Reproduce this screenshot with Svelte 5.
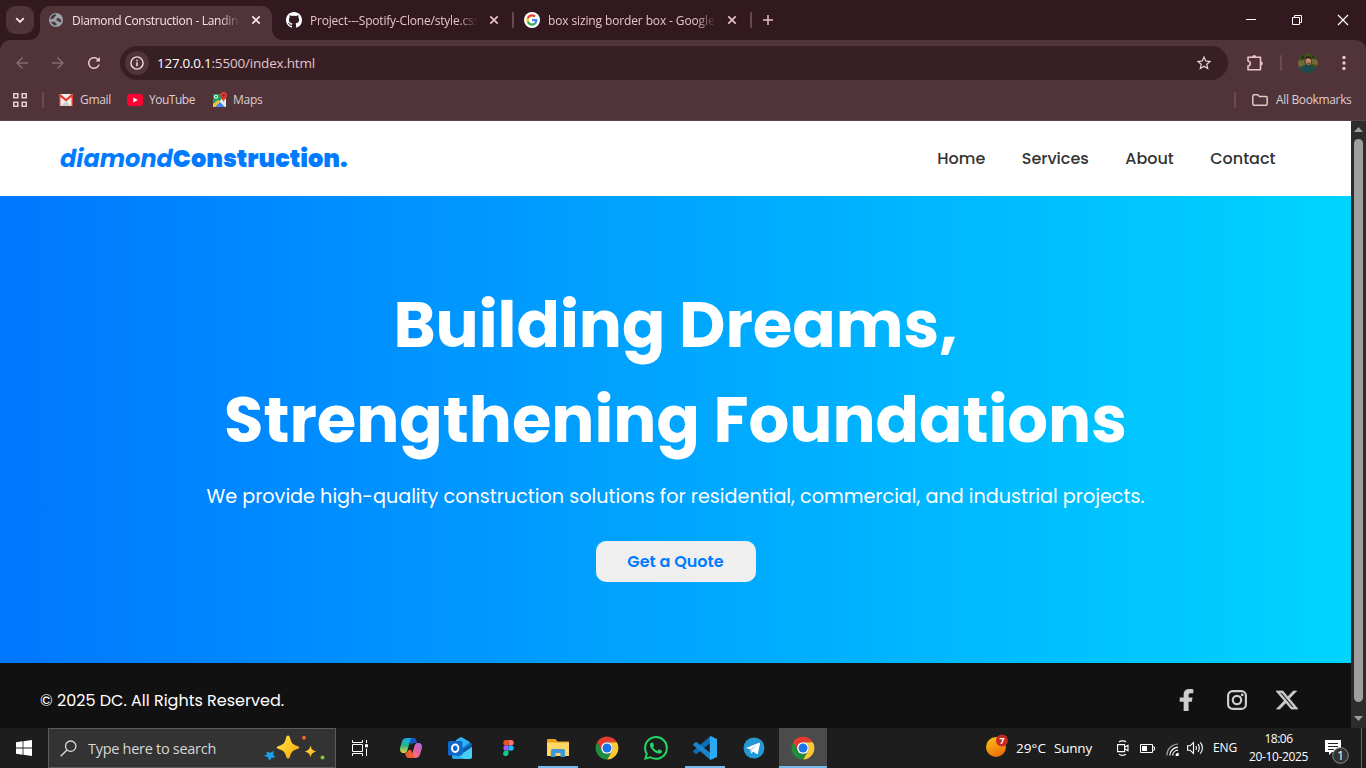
<script>
  // Tracks a line of text so that it fills the given width.
  function fit(node, width) {
    const natural = node.getBoundingClientRect().width;
    node.style.letterSpacing = (width - natural) / node.textContent.length + 'px';
  }

  const links = ['Home', 'Services', 'About', 'Contact'];
</script>

{#snippet chrome()}
  <svg width="24" height="24" viewBox="0 0 48 48">
    <path fill="#e33b2e" d="M4.2 12.5A23 23 0 0 1 43.8 12.5H24A11.5 11.5 0 0 0 14 29.8Z" />
    <path fill="#fcc934" d="M43.8 12.5A23 23 0 0 1 24 47L34 29.8A11.5 11.5 0 0 0 24 12.5Z" />
    <path fill="#1e8e3e" d="M24 47A23 23 0 0 1 4.2 12.5L14 29.8A11.5 11.5 0 0 0 34 29.8Z" />
    <circle cx="24" cy="24" r="11.7" fill="#fff" />
    <circle cx="24" cy="24" r="9" fill="#1a73e8" />
  </svg>
{/snippet}

{#snippet cross()}
  <svg class="cross" width="10" height="10" viewBox="0 0 10 10"><path d="M1.3 1.3l7.4 7.4M8.7 1.3L1.3 8.7" fill="none" stroke="currentColor" stroke-width="1.7" /></svg>
{/snippet}

<div class="screen">
  <div class="tabs">
    <div class="tab-search">
      <svg width="10" height="7" viewBox="0 0 10 7"><path d="M1.2 1.2L5 5l3.8-3.8" fill="none" stroke="currentColor" stroke-width="1.8" /></svg>
    </div>
    <div class="tab active">
      <svg width="14" height="14" viewBox="0 0 14 14">
        <circle cx="7" cy="7" r="7" fill="#9aa3a9" />
        <path d="M7.5 1.2c-1 1-.2 1.8-1.5 2.3C4.600 4 5.500 5.700 4 5.800L1.300 6.200C1.600 3 4.200 1 7.500 1.200zM7.800 5.200l2-.2 2.500 2.200-.5 2-1.800-.1-1.200-1.300-1.400-.3zM2 8.700l3.300.1c1.500.4 1 1.500 2.300 1.700l-.1 2.100C5 12.700 2.700 11 2 8.700z" fill="#50343a" />
      </svg>
      <span class="title"><span class="line" use:fit={166}>Diamond Construction - Landin</span></span>
      {@render cross()}
    </div>
    <div class="tab">
      <svg width="16" height="16" viewBox="0 0 16 16"><path fill="#fff" d="M8 0C3.580 0 0 3.580 0 8c0 3.540 2.290 6.530 5.470 7.590.4.070.55-.17.55-.38 0-.19-.01-.82-.01-1.490-2.010.37-2.530-.49-2.690-.94-.09-.23-.48-.94-.82-1.130-.28-.15-.68-.52-.01-.53.63-.01 1.080.58 1.230.82.72 1.210 1.870.87 2.330.66.070-.52.28-.87.51-1.070-1.780-.2-3.640-.89-3.640-3.950 0-.87.31-1.590.82-2.150-.08-.2-.36-1.020.08-2.120 0 0 .67-.21 2.200.82.64-.18 1.320-.27 2-.27s1.360.090 2 .27c1.530-1.040 2.200-.82 2.200-.82.44 1.100.16 1.920.08 2.120.51.56.82 1.270.82 2.150 0 3.070-1.870 3.750-3.650 3.950.29.25.54.73.54 1.480 0 1.070-.01 1.930-.01 2.200 0 .21.15.46.55.38A8.010 8.010 0 0 0 16 8c0-4.420-3.580-8-8-8z" /></svg>
      <span class="title"><span class="line" use:fit={169}>Project---Spotify-Clone/style.css</span></span>
      {@render cross()}
    </div>
    <i class="tick"></i>
    <div class="tab third">
      <svg width="16" height="16" viewBox="0 0 68 68">
        <circle cx="34" cy="34" r="34" fill="#fff" />
        <g transform="translate(10 10)">
          <path fill="#EA4335" d="M24 9.500c3.540 0 6.710 1.220 9.210 3.600l6.850-6.850C35.900 2.380 30.470 0 24 0 14.620 0 6.510 5.380 2.560 13.220l7.980 6.190C12.430 13.720 17.740 9.500 24 9.500z" />
          <path fill="#4285F4" d="M46.980 24.550c0-1.570-.15-3.090-.38-4.550H24v9.020h12.940c-.58 2.960-2.260 5.480-4.780 7.180l7.730 6c4.510-4.180 7.090-10.360 7.090-17.650z" />
          <path fill="#FBBC05" d="M10.530 28.590c-.48-1.450-.76-2.990-.76-4.590s.27-3.140.76-4.590l-7.980-6.190C.92 16.460 0 20.120 0 24c0 3.880.92 7.540 2.560 10.780l7.970-6.190z" />
          <path fill="#34A853" d="M24 48c6.480 0 11.930-2.130 15.890-5.810l-7.730-6c-2.150 1.450-4.920 2.300-8.160 2.300-6.260 0-11.570-4.220-13.470-9.910l-7.980 6.190C6.510 42.620 14.620 48 24 48z" />
        </g>
      </svg>
      <span class="title"><span class="line" use:fit={166.500}>box sizing border box - Google</span></span>
      {@render cross()}
    </div>
    <i class="tick"></i>
    <svg class="plus" width="10" height="10" viewBox="0 0 10 10"><path d="M5 0v10M0 5h10" stroke="#e6bdc7" stroke-width="1.500" /></svg>
    <div class="window">
      <svg width="10" height="10" viewBox="0 0 10 10"><path d="M0 4.500h10" stroke="#fff" /></svg>
      <svg width="10" height="10" viewBox="0 0 10 10"><path d="M.5 2.500h7v7h-7zM2.500 2.500v-2h7v7h-2" fill="none" stroke="#fff" /></svg>
      <svg width="10" height="10" viewBox="0 0 10 10"><path d="M0 0l10 10M10 0L0 10" stroke="#fff" stroke-width="1.200" /></svg>
    </div>
  </div>

  <div class="chrome">
    <div class="toolbar">
      <svg class="dim" width="18" height="18" viewBox="0 0 24 24"><path fill="currentColor" d="M20 11H7.830l5.590-5.590L12 4l-8 8 8 8 1.410-1.410L7.830 13H20z" /></svg>
      <svg class="dim" width="18" height="18" viewBox="0 0 24 24"><path fill="currentColor" d="M4 11h12.170l-5.590-5.590L12 4l8 8-8 8-1.410-1.410L16.170 13H4z" /></svg>
      <svg width="18" height="18" viewBox="0 0 24 24"><path fill="#ecc3cd" d="M17.650 6.350C16.200 4.900 14.210 4 12 4c-4.420 0-7.990 3.580-7.990 8s3.570 8 7.990 8c3.730 0 6.840-2.550 7.730-6h-2.080c-.82 2.330-3.040 4-5.650 4-3.310 0-6-2.690-6-6s2.690-6 6-6c1.660 0 3.140.69 4.220 1.780L14 10h6V4z" /></svg>
      <div class="omnibox">
        <div class="info">
          <svg width="14" height="14" viewBox="0 0 14 14"><circle cx="7" cy="7" r="6.100" fill="none" stroke="#eddde0" stroke-width="1.400" /><path d="M7 6.200v4M7 3.700v1.500" stroke="#eddde0" stroke-width="1.500" /></svg>
        </div>
        <span class="url"><b class="line" use:fit={54.500}>127.0.0.1</b><span class="line" use:fit={103.500}>:5500/index.html</span></span>
        <svg width="18" height="18" viewBox="0 0 24 24"><path fill="#e6d3d6" d="M22 9.240l-7.190-.62L12 2 9.190 8.630 2 9.240l5.460 4.730L5.820 21 12 17.270 18.180 21l-1.630-7.030zM12 15.400l-3.760 2.270 1-4.280-3.320-2.880 4.380-.38L12 6.100l1.710 4.040 4.380.38-3.320 2.880 1 4.280z" /></svg>
      </div>
      <svg class="puzzle" width="18" height="18" viewBox="0 0 18 18"><path d="M2 3.300h12.500v12.400H2V12c3-.5 3-4.500 0-5z" fill="none" stroke="#ecc3cd" stroke-width="1.600" stroke-linejoin="round" /><path d="M6.200 3a2 2 0 0 1 4 0zM14.800 7.500a2 2 0 0 1 0 4z" fill="#ecc3cd" /></svg>
      <i class="tick"></i>
      <svg class="avatar" width="20" height="20" viewBox="0 0 20 20">
        <defs><clipPath id="face"><circle cx="10" cy="10" r="10" /></clipPath></defs>
        <g clip-path="url(#face)">
          <path fill="#46501f" d="M0 0h20v20H0z" />
          <path fill="#75683a" d="M0 8l6-1 1 5-7 2zM14 6l6 1v5l-6-1z" />
          <path fill="#293216" d="M3 2l4 2-3 3zM13 1l4 3-2 2z" />
          <path fill="#204b4e" d="M1 20c0-5 2-7 7-8h4c5 1 7 4 7 8z" />
          <ellipse cx="10.300" cy="7.800" rx="2.600" ry="4" fill="#c58b6e" />
          <path fill="#231b18" d="M7.300 6.500c-.3-4.500 6.300-4.500 6 0-2-1.600-4-1.600-6 0z" />
          <path fill="#6d4033" d="M8.800 9.500h3v1.200h-3z" />
        </g>
      </svg>
      <svg class="dots" width="4" height="16" viewBox="0 0 4 16"><g fill="#ecc3cd"><circle cx="2" cy="2.500" r="1.700" /><circle cx="2" cy="8" r="1.700" /><circle cx="2" cy="13.500" r="1.700" /></g></svg>
    </div>

    <div class="bookmarks">
      <svg class="grid" width="14" height="14" viewBox="0 0 14 14"><path d="M.8.8h4v4h-4zM9.200.8h4v4h-4zM.8 9.200h4v4h-4zM9.200 9.200h4v4h-4z" fill="none" stroke="#e0cdd0" stroke-width="1.600" /></svg>
      <i class="tick"></i>
      <svg class="gmail" width="14" height="12" viewBox="0 0 14 12"><path fill="#f1efef" d="M0 0h14v12H0z" /><path fill="#d3d0d0" d="M2 12l5-5 5 5z" /><path fill="#e13a2e" d="M0 1.200C0 .2 1.200-.2 2 .4l5 4.400L12 .4c.8-.6 2-.2 2 .8V12h-1.500V3L7 7.500 1.500 3v9H0z" /></svg>
      <span class="line" use:fit={31}>Gmail</span>
      <svg class="yt" width="16" height="12" viewBox="0 0 16 12"><rect width="16" height="12" rx="3" fill="#ff0033" /><path fill="#fff" d="M6.300 3.500l4.500 2.500-4.500 2.500z" /></svg>
      <span class="line" use:fit={46}>YouTube</span>
      <svg class="map" width="16" height="16" viewBox="0 0 16 16"><path fill="#1fa15d" d="M1 2h13v13H1z" /><path fill="#e8eaed" d="M1 15L12 5l2 2v8z" /><path fill="#fbc02d" d="M1 12l5-4 2 2-5 5H1z" /><path fill="#4285f4" d="M3 15l5-5 5 5z" /><circle cx="4" cy="4.800" r="1.500" fill="none" stroke="#fff" /><path fill="#e53935" d="M8.200 3.500a3.400 3.400 0 0 1 6.800 0c0 2-2.400 3.500-3.400 6.500-1-3-3.400-4.500-3.400-6.500z" /><circle cx="11.600" cy="3.500" r="1.200" fill="#8e1f1b" /></svg>
      <span class="line" use:fit={29.500}>Maps</span>
      <div class="all">
        <i class="tick"></i>
        <svg width="16" height="12" viewBox="0 0 16 12"><path d="M.8 10V2c0-.7.4-1.200 1.200-1.200h3.700l1.700 1.700H14c.8 0 1.200.5 1.200 1.200V10c0 .7-.4 1.200-1.200 1.200H2c-.8 0-1.200-.5-1.200-1.200z" fill="none" stroke="#ddc7cb" stroke-width="1.500" /></svg>
        <span class="line" use:fit={75.500}>All Bookmarks</span>
      </div>
    </div>
  </div>

  <div class="viewport">
    <div class="page">
      <header>
        <div class="logo"><em>diamond</em><strong>Construction.</strong></div>
        <nav>
          {#each links as link}
            <a href="#top">{link}</a>
          {/each}
        </nav>
      </header>
      <main>
        <h1>Building Dreams,<br />Strengthening Foundations</h1>
        <p>We provide high-quality construction solutions for residential, commercial, and industrial projects.</p>
        <button>Get a Quote</button>
      </main>
      <footer>
        <span class="copy">© 2025 DC. All Rights Reserved.</span>
        <div class="social">
          <svg width="22" height="22" viewBox="-84 0 512 512"><path fill="#ccc" d="M285 294l15-98h-91v-50c0-25.350 12.420-46 52.240-46h58V4S270 0 235 0c-96 0-141 44.380-141 130v66H2v98h92v218h115V294z" /></svg>
          <svg width="22" height="22" viewBox="0 0 22 22"><rect x="2.100" y="2.100" width="17.800" height="17.800" rx="4.500" fill="none" stroke="#ccc" stroke-width="2.200" /><circle cx="11" cy="11" r="4.200" fill="none" stroke="#ccc" stroke-width="2.200" /><circle cx="16.200" cy="5.900" r="1.400" fill="#ccc" /></svg>
          <svg width="22" height="20" viewBox="0 0 16 16" preserveAspectRatio="none"><path fill="#ccc" stroke="#ccc" stroke-width=".5" d="M12.600.75h2.454l-5.360 6.142L16 15.250h-4.937l-3.867-5.070-4.425 5.070H.316l5.733-6.570L0 .75h5.063l3.495 4.633L12.601.75Zm-.86 13.028h1.360L4.323 2.145H2.865z" /></svg>
        </div>
      </footer>
    </div>
    <div class="scrollbar">
      <svg width="9" height="5" viewBox="0 0 9 5"><path fill="#9f9f9f" d="M0 5l4.500-5L9 5z" /></svg>
      <div class="thumb"></div>
      <svg width="9" height="5" viewBox="0 0 9 5"><path fill="#9f9f9f" d="M0 0l4.500 5L9 0z" /></svg>
    </div>
  </div>

  <div class="taskbar">
    <div class="start"><svg width="16" height="16" viewBox="0 0 16 16"><path fill="#fff" d="M0 2.200l6.600-.9v6.300H0zM7.400 1.200L16 0v7.600H7.400zM0 8.400h6.600v6.300L0 13.800zM7.400 8.400H16V16l-8.600-1.200z" /></svg></div>
    <div class="search">
      <svg width="17" height="17" viewBox="0 0 17 17"><circle cx="10.700" cy="6.200" r="5.200" fill="none" stroke="#ddd" stroke-width="1.300" /><path d="M7 10L.7 16.300" stroke="#ddd" stroke-width="1.300" /></svg>
      <span class="line" use:fit={128}>Type here to search</span>
      <svg class="sparkles" width="62" height="26" viewBox="0 0 62 26">
        <defs><linearGradient id="gold" x2="1" y2="1"><stop offset="0" stop-color="#ffe347" /><stop offset=".5" stop-color="#ffc928" /><stop offset="1" stop-color="#f09a13" /></linearGradient></defs>
        <path fill="url(#gold)" d="M24 .5c1 0 1.500.7 2 2.500 1.500 5.500 2.500 6.300 7.500 8 2.500.8 2.500 2.200 0 3-5 1.700-6 2.500-7.500 7.500-.8 2.700-3 2.700-3.800 0-1.500-5-2.700-5.800-7.700-7.500-2.500-.8-2.500-2.200 0-3 5-1.700 6.200-2.500 7.500-8 .5-1.800 1-2.500 2-2.500z" />
        <path fill="url(#gold)" d="M46.500 10.500c1.200 4.300 1.700 4.600 5.700 6-4 1.400-4.500 1.700-5.700 6-1.200-4.300-1.700-4.600-5.700-6 4-1.400 4.500-1.700 5.700-6z" />
        <path fill="#1ba1e8" d="M2.300 16.500l4 1.200 3.500-1.700-.5 3.700 2 2.600-3.500.4-2.600 3.100-1.200-3.500-4-1.500 3-1.300z" />
        <circle cx="40" cy="2.800" r="2" fill="#f2622a" /><circle cx="58.500" cy="22.500" r="2" fill="#86c440" />
      </svg>
    </div>
    <div class="taskview"><svg width="16" height="16" viewBox="0 0 16 16"><path d="M.5 4.500h10v7H.5zM.5 0v2.500h10V0M.5 16v-2.500h10V16M14.500 0v3M14.500 8.500V16" fill="none" stroke="#fff" /><path fill="#fff" d="M13 4.200h3v3h-3z" /></svg></div>
    <div class="apps">
      <div class="app">
        <svg width="22" height="20" viewBox="0 0 22 20">
          <defs>
            <linearGradient id="cool" x2="0" y2="1"><stop offset="0" stop-color="#1ca7f5" /><stop offset=".5" stop-color="#28b783" /><stop offset="1" stop-color="#e9d33b" /></linearGradient>
            <linearGradient id="warm" x1="1" x2="0" y2="1"><stop offset="0" stop-color="#a56bf2" /><stop offset=".5" stop-color="#ec609b" /><stop offset="1" stop-color="#fa9448" /></linearGradient>
          </defs>
          <path fill="#1558c9" d="M7 0h7c2 0 2.300 1.800 3 5h-3c-1.500 0-2.500 1-3 2z" />
          <path fill="url(#cool)" d="M7 0h5.500c-1.500 0-2 1-2.500 3L7.500 12c-.7 2.500-2 3-4 3C.5 15-.6 12.500.3 9L2.200 3C3 1 4.500 0 7 0z" />
          <path fill="url(#warm)" d="M15 20H9.500c1.500 0 2-1 2.500-3l2.500-9c.7-2.500 2-3 4-3 3 0 4.100 2.500 3.200 6L19.800 17c-.8 2-2.300 3-4.800 3z" />
          <path fill="#ef5b35" d="M15 20H8.500c-2 0-2.600-2-3.500-5 2 0 3-1.500 3.500-3H11z" />
        </svg>
      </div>
      <div class="app">
        <svg width="24" height="22" viewBox="0 0 24 22"><path fill="#128ad8" d="M4 7l8-6q1.500-1 3 0l8.500 6v9H4z" /><path fill="#0c59a8" d="M15 12l9-6v5l-9 6z" /><path fill="#2fb4ef" d="M8 3l5-3 9 5-8 6H7z" /><path fill="#45cff5" d="M24 10v10c0 1.200-.8 2-2 2H6z" /><path fill="#2aa9e8" d="M4 15l12 7H6c-1.300 0-2-.7-2-2z" /><rect y="4" width="14.500" height="14.500" rx="1.500" fill="#0f68c9" /><ellipse cx="7.200" cy="11.200" rx="3.200" ry="3.700" fill="none" stroke="#fff" stroke-width="2" /></svg>
      </div>
      <div class="app figma">
        <svg width="11" height="16" viewBox="0 0 11 16"><path fill="#f24e1e" d="M5.500 0H3a2.600 2.600 0 0 0 0 5.300h2.500z" /><path fill="#ff7262" d="M5.500 0H8a2.600 2.600 0 0 1 0 5.300H5.500z" /><path fill="#a259ff" d="M5.500 5.300H3a2.600 2.600 0 0 0 0 5.300h2.500z" /><circle cx="8" cy="8" r="2.700" fill="#1abcfe" /><path fill="#0acf83" d="M5.500 10.600H3a2.700 2.700 0 1 0 2.500 2.700z" /></svg>
      </div>
      <div class="app running">
        <svg width="22" height="18" viewBox="0 0 22 18"><path fill="#e7a11a" d="M0 1q0-1 1-1h7.500l2 2.500H22V9H0z" /><path fill="#ffd767" d="M0 3.500h22V17H0z" /><path fill="#3a97dc" d="M4 18v-6.500Q4 10 5.500 10h11q1.500 0 1.500 1.500V18h-4.500v-4h-5v4z" /></svg>
      </div>
      <div class="app">{@render chrome()}</div>
      <div class="app">
        <svg width="24" height="24" viewBox="0 0 16 16"><path fill="#25d366" d="M13.601 2.326A7.850 7.850 0 0 0 7.994 0C3.627 0 .068 3.558.064 7.926c0 1.399.366 2.760 1.057 3.965L0 16l4.204-1.102a7.900 7.900 0 0 0 3.790.965h.004c4.368 0 7.926-3.558 7.930-7.930A7.900 7.900 0 0 0 13.600 2.326zM7.994 14.521a6.600 6.600 0 0 1-3.356-.92l-.24-.144-2.494.654.666-2.433-.156-.251a6.560 6.560 0 0 1-1.007-3.505c0-3.626 2.957-6.584 6.591-6.584a6.560 6.560 0 0 1 4.660 1.931 6.560 6.560 0 0 1 1.928 4.660c-.004 3.639-2.961 6.592-6.592 6.592m3.615-4.934c-.197-.099-1.170-.578-1.353-.646-.182-.065-.315-.099-.445.099-.133.197-.513.646-.627.775-.114.133-.232.148-.43.050-.197-.1-.836-.308-1.592-.985-.59-.525-.985-1.175-1.103-1.372-.114-.198-.011-.304.088-.403.087-.088.197-.232.296-.346.1-.114.133-.198.198-.33.065-.134.034-.248-.015-.347-.05-.099-.445-1.076-.612-1.470-.16-.389-.323-.335-.445-.34-.114-.007-.247-.007-.38-.007a.73.73 0 0 0-.529.247c-.182.198-.691.677-.691 1.654s.71 1.916.81 2.049c.098.133 1.394 2.132 3.383 2.992.47.205.84.326 1.129.418.475.152.904.129 1.246.080.38-.058 1.171-.48 1.338-.943.164-.464.164-.86.114-.943-.049-.084-.182-.133-.38-.232" /></svg>
      </div>
      <div class="app running">
        <svg width="24" height="24" viewBox="0 0 24 24"><path fill="#0d6eb5" d="M17.500 0v7L3 18.200l-2.600-2.100q-.6-.7 0-1.400z" /><path fill="#1b85cf" d="M17.500 24v-7L3 5.800.4 7.900q-.6.7 0 1.400z" /><path fill="#2da8f2" d="M17.500 0L24 3v18l-6.500 3q-.7-.5-.7-1.500v-21q0-1 .7-1.500z" /></svg>
      </div>
      <div class="app">
        <svg width="22" height="22" viewBox="0 0 22 22"><circle cx="11" cy="11" r="10.500" fill="#2398d4" /><path fill="#fff" d="M3.500 10.700L16 5.700c.7-.2 1.200.1 1 1.100l-2.100 9.700c-.2.800-.7 1-1.300.6l-3.300-2.500-1.600 1.600c-.3.300-.6.300-.7-.3l-.9-3.600-3.300-1c-.8-.2-.8-.5-.3-.6z" /><path fill="#b8d8ea" d="M7.200 12.200l7.200-4.600-5.300 5.500-.4 3.100z" /></svg>
      </div>
      <div class="app running current">{@render chrome()}</div>
    </div>
    <div class="tray">
      <svg class="sun" width="24" height="24" viewBox="0 0 24 24"><defs><linearGradient id="sun" x2=".6" y2="1"><stop offset="0" stop-color="#ffc514" /><stop offset="1" stop-color="#e96f0b" /></linearGradient></defs><circle cx="10" cy="13" r="10" fill="url(#sun)" /><circle cx="16" cy="6.500" r="6" fill="#c32b22" /><text x="16" y="10" text-anchor="middle" fill="#fff" font-size="9" font-weight="700">7</text></svg>
      <span class="line" use:fit={30}>29°C</span>
      <span class="line sunny" use:fit={38}>Sunny</span>
      <svg class="meet" width="12" height="16" viewBox="0 0 12 16"><path d="M.6 4.600h7v7h-7zM8 7l3-1.700v5.400L8 9M2 2c1.500-1.500 5.500-1.500 7 0M2 14.200c1.500 1.500 5.500 1.500 7 0" fill="none" stroke="#fff" stroke-width="1.100" /></svg>
      <svg class="battery" width="15" height="9" viewBox="0 0 15 9"><path d="M.5.500h12v8H.5zM13 3h1.500v3H13" fill="none" stroke="#fff" /><path fill="#fff" d="M2 2h5v5H2z" /></svg>
      <svg class="wifi" width="13" height="13" viewBox="0 0 13 13"><g fill="none" stroke="#999" stroke-width="1.200"><path d="M.8 12.500A11.500 11.500 0 0 1 12 1" /><path stroke="#fff" d="M3.800 12.500A8.500 8.500 0 0 1 12 4.200M6.700 12.500A5.500 5.500 0 0 1 12 7.200" /></g><path fill="#fff" d="M9.500 13a3.300 3.300 0 0 1 3.200-3.200V13z" /></svg>
      <svg class="sound" width="17" height="14" viewBox="0 0 17 14"><path d="M.6 4.800h2.500L6.500 1.500v11L3.100 9.200H.6zM8.800 5c.9 1.200.9 2.800 0 4M11 3.200c1.700 2 1.700 5.600 0 7.600M13.300 1.300c2.800 3 2.800 8.400 0 11.400" fill="none" stroke="#fff" stroke-width="1.100" /></svg>
      <span class="line eng" use:fit={24}>ENG</span>
      <div class="clock"><span class="line" use:fit={28}>18:06</span><span class="line" use:fit={59}>20-10-2025</span></div>
      <svg class="notes" width="25" height="26" viewBox="0 0 25 26"><path fill="#fff" d="M0 1h16v12H7l-3 3v-3H0z" /><path d="M3 4.500h10M3 7.500h10M3 10.500h6" stroke="#222" /><circle cx="15.500" cy="16.500" r="7.800" fill="#333" stroke="#8e8e8e" /><text x="15.500" y="21" text-anchor="middle" fill="#fff" font-size="12.500">1</text></svg>
      <i class="peek"></i>
    </div>
  </div>
</div>

<style>
  :global(body) { margin: 0; overflow: hidden; background: #111; }
  .screen { width: 1366px; height: 768px; display: flex; flex-direction: column; overflow: hidden; background: #31191f; font: 12px/16px "Open Sans", "Noto Sans", sans-serif; }
  .screen * { box-sizing: border-box; }
  svg { display: block; flex: none; overflow: visible; }
  .line { display: inline-block; white-space: nowrap; flex: none; }
  .tick { width: 2px; height: 16px; background: #6c4a51; flex: none; border-radius: 1px; }

  .tabs { height: 40px; flex: none; display: flex; align-items: center; color: #e9c1cb; }
  .tab-search { width: 28px; height: 28px; margin: 0 6px; border-radius: 9px; background: #503439; color: #f6e6e9; display: grid; place-items: center; }
  .tab { display: flex; align-items: center; width: 240px; height: 34px; padding: 0 12px 0 14px; }
  .tab.active { align-self: flex-end; width: 232px; padding: 0 0 6px 9px; background: #503439; color: #f6e3e7; border-radius: 10px 10px 0 0; position: relative; }
  .tab.active::before, .tab.active::after { content: ""; position: absolute; bottom: 0; width: 10px; height: 10px; }
  .tab.active::before { left: -10px; background: radial-gradient(circle at 0 0, transparent 9.500px, #503439 10px); }
  .tab.active::after { right: -10px; background: radial-gradient(circle at 100% 0, transparent 9.500px, #503439 10px); }
  .tab.active .title { margin-left: 9px; width: 168px; padding-top: 2px; }
  .tab.third { width: 236px; padding-left: 10px; }
  .title { margin-left: 8px; width: 168px; height: 18px; padding-top: 2px; overflow: hidden; flex: none; mask-image: linear-gradient(90deg, #000 88%, transparent); }
  .cross { margin-left: 11px; }
  .plus { margin-left: 11px; }
  .window { margin-left: auto; padding-right: 18px; display: flex; gap: 36px; }

  .chrome { height: 81px; flex: none; background: #503439; border-bottom: 1px solid #5c4146; border-radius: 10px 10px 0 0; }
  .toolbar { height: 46px; display: flex; align-items: center; padding: 0 20px 0 13px; }
  .toolbar > svg + svg { margin-left: 18px; }
  .dim { color: #876a70; }
  .omnibox { width: 1108px; height: 34px; margin-left: 17px; padding: 0 15px 0 5px; display: flex; align-items: center; border-radius: 17px; background: #381f24; }
  .info { width: 24px; height: 24px; border-radius: 50%; background: #503439; display: grid; place-items: center; }
  .url { margin-left: 8px; margin-right: auto; font-size: 13.500px; color: #e2c6cb; }
  .url b { font-weight: 400; color: #fff; }
  .toolbar .puzzle { margin-left: 18px; }
  .toolbar .tick { margin-left: 16px; }
  .toolbar .avatar { margin-left: 16px; }
  .toolbar .dots { margin-left: 24px; }

  .bookmarks { height: 28px; display: flex; align-items: center; padding-left: 13px; color: #dfcdd0; }
  .bookmarks .tick { margin-left: 15px; }
  .gmail { margin: 0 7px 0 15px; }
  .yt { margin: 0 6px 0 16px; }
  .map { margin: 0 5px 0 17px; }
  .all { margin-left: auto; display: flex; align-items: center; padding-right: 14.500px; }
  .all svg { margin: 0 8px 0 16px; }

  .viewport { height: 607px; flex: none; display: flex; font-family: Poppins, Inter, sans-serif; }
  .page { width: 1351px; display: flex; flex-direction: column; }
  header { height: 75px; flex: none; background: #fff; display: flex; align-items: center; justify-content: space-between; padding: 0 75.500px 0 60px; }
  .logo { font-size: 24px; line-height: 36px; color: #007bff; display: flex; }
  .logo em { font-weight: 700; }
  .logo strong { font-weight: 900; }
  nav { display: flex; gap: 36.400px; }
  nav a { color: #333; font-size: 16px; font-weight: 500; line-height: 24px; text-decoration: none; }
  main { height: 467px; flex: none; display: flex; flex-direction: column; align-items: center; background: linear-gradient(90deg, #0077ff, #00d4ff); color: #fff; padding-top: 81px; }
  h1 { margin: 0; text-align: center; font-size: 64px; line-height: 95px; font-weight: 700; }
  p { margin: 15px 0 0; font-size: 19.200px; line-height: 30px; white-space: nowrap; }
  button { width: 160px; height: 41px; margin-top: 29px; padding: 0; border: 0; border-radius: 10px; background: #efefef; color: #007bff; font: 600 16px/24px Poppins, Inter, sans-serif; }
  footer { height: 65px; background: #111; color: #fff; font-size: 16px; line-height: 24px; display: flex; align-items: center; justify-content: space-between; padding: 9px 53px 0 40px; }
  .copy { padding-top: 2px; }
  .social { display: flex; gap: 28px; align-items: center; }
  .scrollbar { width: 15px; background: #2c2c2c; display: flex; flex-direction: column; align-items: center; padding-top: 6px; }
  .thumb { width: 9px; height: 563px; border-radius: 5px; background: #9f9f9f; margin: 7px 0 14px; }

  .taskbar { height: 40px; flex: none; display: flex; background: #1d1d1d; color: #fff; }
  .start, .taskview { width: 48px; display: grid; place-items: center; }
  .search { width: 288px; border: 1px solid #5b5b5b; background: #333; display: flex; align-items: center; padding: 0 9px 0 11px; font-size: 14.500px; line-height: 20px; color: #d6d6d6; }
  .search .line { margin-left: 11px; padding-top: 1px; }
  .sparkles { margin-left: auto; }
  .apps { display: flex; gap: 1px; margin-left: 3px; }
  .app { width: 48px; display: grid; place-items: center; position: relative; }
  .figma { padding-right: 2px; }
  .running::after { content: ""; position: absolute; left: 4px; right: 4px; bottom: 0; height: 2px; background: #76b9ed; }
  .current { background: #4b4b4b; }
  .current::after { left: 0; right: 0; }
  .tray { margin-left: auto; display: flex; align-items: center; font-size: 13.500px; height: 40px; }
  .tray .sun { margin-right: 6px; margin-top: -4px; }
  .sunny { margin-left: 8px; }
  .meet { margin-left: 25px; }
  .battery { margin-left: 11px; }
  .wifi { margin-left: 11px; margin-top: 2px; }
  .sound { margin-left: 8px; }
  .tray .eng { margin-left: 9px; font-size: 12px; }
  .clock { width: 60px; margin-left: 11.500px; display: flex; flex-direction: column; align-items: center; font-size: 12px; line-height: 18px; }
  .notes { margin-left: 16.500px; margin-top: 8px; }
  .peek { width: 1px; height: 40px; background: #666; margin: 0 4px 0 11px; }
</style>
